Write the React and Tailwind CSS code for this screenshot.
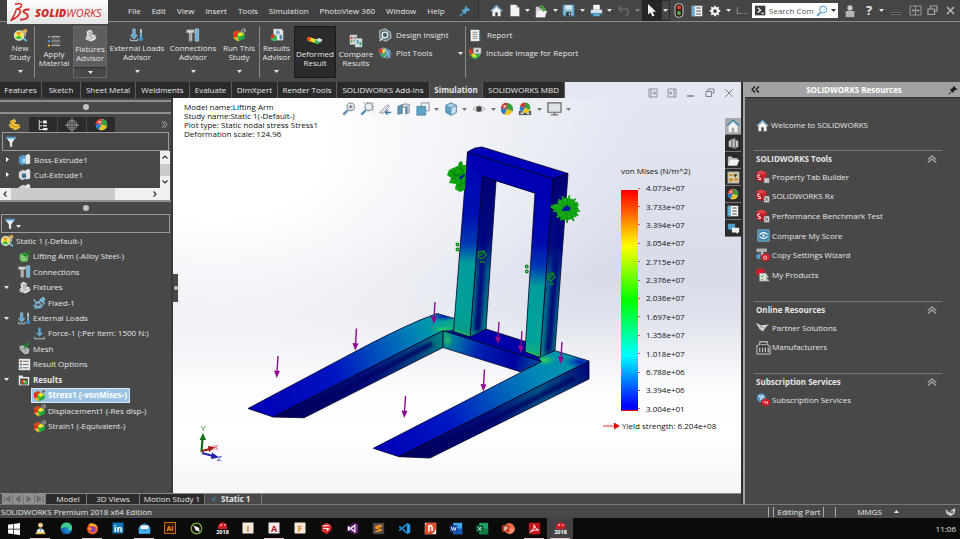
import React from "react";

/* ---------- small drawing helpers ---------- */

function Svg({ size = 14, w, h, box = "0 0 16 16", className = "", children }) {
  return (
    <svg width={w || size} height={h || size} viewBox={box} fill="none" className={"shrink-0 " + className} aria-hidden="true">
      {children}
    </svg>
  );
}

function Caret({ color = "#e8e8e8", up = false }) {
  return (
    <Svg w={5} h={3} box="0 0 5 3">
      <path d={up ? "M0 3L2.5 0L5 3Z" : "M0 0H5L2.5 3Z"} fill={color} />
    </Svg>
  );
}

const Home = ({ size = 12 }) => (
  <Svg size={size}>
    <path d="M3 8V15H6.5V10H9.5V15H13V8L8 3.5Z" fill="#f4f4f4" />
    <path d="M1 8.5L8 2L15 8.5" stroke="#9cc9e0" strokeWidth="1.6" />
    <path d="M1 7.5L8 1L15 7.5" stroke="#2f6f92" strokeWidth="1.2" />
  </Svg>
);

const Wheel = ({ size = 12 }) => (
  <Svg size={size}>
    <circle cx="8" cy="8" r="7" fill="#eee" />
    <path d="M8 8V1A7 7 0 0 1 14.5 10.5Z" fill="#35a03a" />
    <path d="M8 8L14.5 10.5A7 7 0 0 1 5 14.3Z" fill="#f0c419" />
    <path d="M8 8L5 14.3A7 7 0 0 1 1 7Z" fill="#2a78c8" />
    <path d="M8 8L1 7A7 7 0 0 1 8 1Z" fill="#d8302c" />
    <circle cx="5.5" cy="5" r="1.6" fill="#fff" opacity=".75" />
  </Svg>
);

const Magnify = ({ size = 13, extra }) => (
  <Svg size={size}>
    <path d="M6.5 9.500L1.500 14.500" stroke="#5a93b3" strokeWidth="2.800" />
    <circle cx="10" cy="5.500" r="4.300" fill="#e9eff3" stroke="#7f8f99" strokeWidth="1.3" />
    {extra}
  </Svg>
);

const StudyIcon = ({ size = 15 }) => (
  <Svg size={size}>
    <path d="M10 9.500L14.5 14" stroke="#6bb4dc" strokeWidth="2.200" />
    <circle cx="6.500" cy="8" r="5" fill="#f5e636" stroke="#cfe4ea" strokeWidth="1.3" />
    <path d="M2.500 10Q5.500 13 9.500 11L6.500 8Z" fill="#35b954" />
    <path d="M3.500 5Q5.500 3.500 8.500 4.500L6.500 8Z" fill="#f08a2c" />
    <path d="M9 3L14 .5L15.500 4L12 6Z" fill="#d7a85a" />
    <path d="M13 5V9" stroke="#ddd" />
  </Svg>
);

const ListIcon = ({ size = 14 }) => (
  <Svg size={size}>
    <path d="M5 3H15M5 8H15M5 13H15" stroke="#b5b5b5" strokeWidth="1.4" />
    <path d="M5 5.500H15M5 10.500H15" stroke="#7d7d7d" />
    <rect x="1" y="2" width="2.4" height="2.4" fill="#8a8a8a" />
    <rect x="1" y="7" width="2.4" height="2.4" fill="#4f9ed1" />
    <rect x="1" y="12" width="2.4" height="2.4" fill="#e8b13c" />
  </Svg>
);

const FixtureIcon = ({ size = 14 }) => (
  <Svg size={size}>
    <path d="M3 3L7 1L11 3L10 7L13 7L15 9V12L9 15.500L2 13V10L4 8Z" fill="#e6e6e6" />
    <path d="M3 3L7 4.500L6 9L10 11L15 9M2 10.500L8 13L10 11M7 4.500L11 3" stroke="#8b8b8b" strokeWidth=".9" />
    <path d="M7 4.500L10.500 3.500L9.500 7L10 10L6.500 8.500Z" fill="#b9b9b9" />
  </Svg>
);

const LoadsIcon = ({ size = 14 }) => (
  <Svg size={size}>
    <path d="M3 1V8H.5L4.500 13L8.500 8H6V1Z" fill="#5aa7d6" stroke="#cfe7f5" strokeWidth=".5" />
    <path d="M.5 12V14.500H8.500V12" stroke="#bcd" strokeWidth="1.1" />
    <path d="M12.5 1V11" stroke="#d8edf8" strokeWidth="1.8" />
    <circle cx="12.5" cy="12.5" r="2.4" fill="#3c93ca" />
    <path d="M12.5 5V12" stroke="#3c93ca" />
  </Svg>
);

const ConnIcon = ({ size = 14 }) => (
  <Svg size={size}>
    <path d="M.5 2H9.500V5.500H7V15H3.500V5.500H.5Z" fill="#cfcfcf" stroke="#8c8c8c" strokeWidth=".5" />
    <path d="M5.2 6V15" stroke="#777" strokeWidth="1.500" strokeDasharray="1 1" />
    <path d="M10.500 1H14.5V15H10.500Z" fill="#6fb2d8" stroke="#cfe4f0" strokeWidth=".6" />
  </Svg>
);

const HotPart = ({ size = 14, badge = true }) => (
  <Svg size={size}>
    <path d="M1 5L6 2.500L9 5L14.500 6.500L14 12L7 15.500L2 12Z" fill="#2cc24a" />
    <path d="M1 5L6 2.500L9.500 4L6 7Z" fill="#f03a1c" />
    <path d="M1 5L6 7V11L1.500 11.500Z" fill="#e8301c" />
    <path d="M6 7L9.500 4.500L14 7.500L9 10Z" fill="#f6e52b" />
    <path d="M1.500 11.500L6 10L8 15L6 14.800Z" fill="#ffb324" />
    <path d="M9 10L14 7.500V12L7.500 15Z" fill="#24a840" />
    {badge && <path d="M10 3.5L13 .7L15.300 1.500V4L12 5.500Z" fill="#666" stroke="#ddd" strokeWidth=".7" />}
  </Svg>
);

const ResultsIcon = ({ size = 14 }) => (
  <Svg size={size}>
    <path d="M4 1H13L15 3V14H4Z" fill="#e9e9e9" stroke="#999" strokeWidth=".5" />
    <circle cx="9" cy="5" r="2.5" fill="#7fb1d0" />
    <path d="M11 8H13.5V13H11Z" fill="#3f83b3" />
    <path d="M1 9L5 7L8 9V14L4 15L1 13Z" fill="#35b954" />
    <path d="M1 9L5 7L5 11L1 12Z" fill="#e8301c" />
  </Svg>
);

const DeformedIcon = () => (
  <Svg w={16} h={9} box="0 0 16 9">
    <path d="M0 2Q2 0 5 2L11 4V8L5 6Q2 6 0 4Z" fill="#f1e22e" />
    <path d="M0 2Q2 0 3.5 1.3V6L0 4Z" fill="#ef4a1e" />
    <path d="M8 3L15 6L11 8L8 7Z" fill="#2fb64b" />
    <path d="M8 4L12 2L16 4L13 6Z" fill="#d9dfe4" />
  </Svg>
);

const CompareIcon = () => (
  <Svg size={14}>
    <path d="M1 1H9V12H1Z" fill="#e2e2e2" stroke="#999" strokeWidth=".5" />
    <path d="M7 5H15V15H7Z" fill="#d3dde4" stroke="#999" strokeWidth=".5" />
    <path d="M2 3H4V6H2Z" fill="#e03a20" />
    <path d="M2 7H4V10H2Z" fill="#37b04a" />
    <path d="M9 7H11V11H9Z" fill="#3a8cc4" />
    <path d="M12 9H14V13H12Z" fill="#37b04a" />
    <path d="M5 4H8M5 7H7" stroke="#555" />
  </Svg>
);

const InsightIcon = () => (
  <Svg size={14}>
    <path d="M2 3L8 1L14 5L15 11L9 15L2 12Z" fill="#5b6c76" stroke="#b8c5cc" strokeWidth="1.2" />
    <circle cx="8" cy="8" r="3.2" fill="#48606c" stroke="#e7eef2" strokeWidth="1.5" />
    <path d="M5.5 10.5L2 15" stroke="#dfe7ea" strokeWidth="1.5" />
  </Svg>
);

const PlotToolsIcon = () => (
  <Svg size={14}>
    <path d="M1 4L6 2L12 4L15 9L11 14L4 12Z" fill="#3a86c4" stroke="#aab" strokeWidth=".7" />
    <path d="M1 4L5 2.5L5 8L2 8Z" fill="#e8301c" />
    <path d="M5 3L9 4L7 9L5 8Z" fill="#f3df2b" />
    <path d="M5 8L9 9L8 13L4 12Z" fill="#37b04a" />
    <path d="M8 3L14 14M14 5L7 13" stroke="#d5d5d5" strokeWidth="1.1" />
  </Svg>
);

const ReportIcon = () => (
  <Svg size={13}>
    <path d="M3 1H14V15H3Z" fill="#f0f0f0" />
    <path d="M2 2V15" stroke="#222" strokeWidth="1.6" strokeDasharray="1 1" />
    <path d="M13.5 2H15V14H13.5Z" fill="#4f9ed1" />
    <path d="M5.5 4H11.5M5.5 6.5H11.5M5.5 9H11.5M5.5 11.5H11.5" stroke="#777" />
  </Svg>
);

const ImageReportIcon = () => (
  <Svg size={14}>
    <path d="M1 4Q1 14 9 15L14 11V8L6 9Z" fill="#35b954" />
    <path d="M1 4L5 3V10L2 9Z" fill="#e8301c" />
    <path d="M4 9L7 8L10 12L6 13Z" fill="#f3df2b" />
    <path d="M6 2H15V9H6Z" fill="#d5d5d5" stroke="#777" strokeWidth=".6" />
    <circle cx="10.5" cy="5.5" r="2" fill="#666" stroke="#fff" strokeWidth=".6" />
  </Svg>
);

const DocIcon = () => (
  <Svg size={13}>
    <path d="M3 1H10L14 5V15H3Z" fill="#f3f3f3" />
    <path d="M10 1V5H14" fill="#bbb" />
  </Svg>
);
const OpenIcon = () => (
  <Svg size={14}>
    <path d="M2 3H6L7 5H13V15H2Z" fill="#cfcfcf" />
    <path d="M4 8H15L12 15H2Z" fill="#f2f2f2" />
    <path d="M6 2Q11 0 12 5H14.5L11 9L8 5H10Q9 3 6 3Z" fill="#49a23c" />
  </Svg>
);
const SaveIcon = () => (
  <Svg size={13}>
    <path d="M1 1H15V15H3L1 13Z" fill="#7fb4d3" stroke="#2d6485" />
    <path d="M4 1.5H12V7H4Z" fill="#dbe7ee" />
    <path d="M5 10H11V15H5Z" fill="#333" />
    <path d="M8.5 11H10V14H8.5Z" fill="#ddd" />
  </Svg>
);
const PrintIcon = () => (
  <Svg size={13}>
    <path d="M4 1H12V7H4Z" fill="#f5f5f5" />
    <path d="M1 7H15V12H1Z" fill="#d8e1e6" />
    <path d="M1 11H15V13H1Z" fill="#3e8cb8" />
    <path d="M4 12H12V15H4Z" fill="#5fa9d0" />
  </Svg>
);
const UndoIcon = () => (
  <Svg size={13}>
    <path d="M2 6H10Q14 6 14 10Q14 13 11 14M6 2L2 6L6 10" stroke="#636363" strokeWidth="2" />
  </Svg>
);
const Traffic = () => (
  <Svg w={10} h={15} box="0 0 10 15">
    <rect x="1" y=".7" width="8" height="13.6" rx="3.5" fill="#3b1c1a" stroke="#c8c8c8" strokeWidth="1" />
    <circle cx="5" cy="4.5" r="2" fill="#e6402c" />
    <circle cx="5" cy="10" r="2" fill="#44b64b" />
  </Svg>
);
const OptionsIcon = ({ size = 13 }) => (
  <Svg size={size}>
    <path d="M1 1H15V15H1Z" fill="#f4f4f4" />
    <path d="M1 1H5V15H1Z" fill="#4d9cc6" />
    <path d="M2 4H4M2 8H4M2 12H4" stroke="#fff" />
    <path d="M7 4H13M7 8H13M7 12H13" stroke="#3a3a3a" strokeWidth="1.2" />
  </Svg>
);
const Gear = () => (
  <Svg size={12}>
    <circle cx="8" cy="8" r="4" stroke="#f4f4f4" strokeWidth="3" />
    <path d="M8 1V3M8 13V15M1 8H3M13 8H15M3 3L4.6 4.6M11.4 11.4L13 13M3 13L4.6 11.4M11.4 4.6L13 3" stroke="#f4f4f4" strokeWidth="2.4" />
  </Svg>
);
const Pin = ({ color = "#5aa3cc", size = 12 }) => (
  <Svg size={size}>
    <path d="M9 1L15 7L13 8L11 8L9 11L9 13L3 7L5 6.5L8 4.5Z" fill={color} />
    <path d="M6 10L1 15" stroke={color} strokeWidth="1.5" />
  </Svg>
);
const Funnel = () => (
  <Svg size={12}>
    <path d="M1.500 2H14.500L9.5 8.500V15L6.5 13.500V8.500Z" fill="#e8eef1" />
    <path d="M1.500 1H14.500V3.5H1.500Z" fill="#4f9ed1" />
  </Svg>
);
const Swx = ({ extra }) => (
  <Svg size={14}>
    <path d="M0 3L6 .5L12 3V11L6 13.500L0 11Z" fill="#d0222a" />
    <path d="M0 3L7 5V13L0 11Z" fill="#ad161e" />
    <path d="M0 3L6 .5L12 3L7 5Z" fill="#e0444a" />
    <path d="M5 6L2 5.500V8L5 9V11L2 10.500" stroke="#fff" strokeWidth="1.100" />
    {extra}
  </Svg>
);
const Chevrons = () => (
  <Svg w={10} h={8} box="0 0 10 8">
    <path d="M1 4.500L5 1L9 4.500M1 7.500L5 4L9 7.500" stroke="#a0a0a0" strokeWidth="1.500" />
  </Svg>
);

/* ---------- title bar ---------- */

const menus = ["File", "Edit", "View", "Insert", "Tools", "Simulation", "PhotoView 360", "Window", "Help"];

function Tool({ label, className, children }) {
  return (
    <button aria-label={label} className={"flex h-full shrink-0 items-center justify-center " + className}>
      {children}
    </button>
  );
}

function Logo() {
  return (
    <div className="relative z-10 flex h-6 w-[101px] shrink-0 items-center gap-1 self-start bg-gradient-to-b from-white to-[#e4e4e4] pl-[3px]">
      <Svg w={21} h={20} box="0 0 21 20">
        <path d="M5 2.500Q11 .5 11.500 3Q11.500 6 5.500 7.500Q10.500 6.500 10.500 9.500Q9.500 14.500 1.500 18Q4.500 13 6 8.500" stroke="#cf2a27" strokeWidth="1.500" />
        <path d="M19.500 7.500Q13 7 13.500 10Q19 12.500 17.500 15.500Q15.500 18 10 17.500" stroke="#cf2a27" strokeWidth="1.900" />
      </Svg>
      <span className="font-['Open_Sans','Noto_Sans',sans-serif] text-[11px] leading-none text-[#cf2a27] italic">
        <b className="font-extrabold">SOLID</b>WORKS
      </span>
    </div>
  );
}

function TitleBar() {
  return (
    <header className="flex h-[22px] shrink-0 items-center border-b border-[#8a8a8a] bg-[#414141] pl-[7px] text-[8px]">
      <Logo />
      <nav className="flex items-center gap-[11px] pl-5">
        {menus.map((m) => (
          <button key={m} className="whitespace-nowrap">{m}</button>
        ))}
      </nav>
      <div className="flex min-w-5 flex-1 justify-end pr-[7px]">
        <button aria-label="Pin menu"><Pin /></button>
      </div>
      <div className="flex h-full shrink-0 items-center border-l border-[#333] bg-[#454545] pl-[9px]">
        <Tool label="Home" className="w-4"><Home size={13} /></Tool>
        <Tool label="New" className="w-5"><DocIcon /></Tool>
        <Tool label="New options" className="w-1.5"><Caret /></Tool>
        <Tool label="Open" className="w-[22px]"><OpenIcon /></Tool>
        <Tool label="Open options" className="w-1.5"><Caret /></Tool>
        <Tool label="Save" className="w-5"><SaveIcon /></Tool>
        <Tool label="Save options" className="w-2"><Caret /></Tool>
        <Tool label="Print" className="w-5"><PrintIcon /></Tool>
        <Tool label="Print options" className="w-1.5"><Caret /></Tool>
        <Tool label="Undo" className="w-[22px]"><UndoIcon /></Tool>
        <Tool label="Undo options" className="mr-0.5 w-1.5"><Caret color="#888" /></Tool>
        <Tool label="Select" className="w-[19px] border border-[#222] bg-[#262626]">
          <Svg w={10} h={13} box="0 0 10 13">
            <path d="M1 0V10.500L3.500 8.500L5.500 12.500L7.500 11.500L5.500 7.800H9Z" fill="#f2f2f2" />
          </Svg>
        </Tool>
        <Tool label="Select options" className="w-[9px] border border-[#2b2b2b]"><Caret /></Tool>
        <Tool label="Rebuild" className="w-[18px]"><Traffic /></Tool>
        <Tool label="File properties" className="w-[18px]"><OptionsIcon size={12} /></Tool>
        <Tool label="Options" className="w-[18px]"><Gear /></Tool>
        <Tool label="Options list" className="w-2"><Caret /></Tool>
        <span className="w-5 text-center text-[9px] whitespace-nowrap text-[#a0a0a0]">L...</span>
        <label className="flex h-[15px] w-[86px] items-center bg-white pl-[3px]">
          <Svg size={11}>
            <path d="M0 1H15V15H0Z" fill="#3b3b3b" />
            <path d="M4 4L8 7.500L4 11M9 12H13" stroke="#fff" strokeWidth="1.800" />
          </Svg>
          <input aria-label="Search Commands" placeholder="Search Com" className="w-0 min-w-0 flex-1 bg-transparent pl-[3px] text-[8px] outline-none placeholder:text-[#555]" />
          <Svg size={12}>
            <path d="M6 10L1.500 14.500" stroke="#4b93bd" strokeWidth="2.200" />
            <circle cx="9.500" cy="6" r="4.700" fill="#eaf5fb" stroke="#4b93bd" strokeWidth="1.200" />
          </Svg>
          <span className="pr-0.5 pl-[3px]"><Caret color="#333" /></span>
        </label>
        <Tool label="Account" className="w-6">
          <Svg size={14}>
            <circle cx="8" cy="4.500" r="3" fill="#c9c9c9" />
            <path d="M3 8H13V15H3Z" fill="#b5b5b5" />
          </Svg>
        </Tool>
        <Tool label="Help" className="w-3.5 text-[13px] font-bold">?</Tool>
        <Tool label="Help options" className="w-2.5"><Caret /></Tool>
        <Tool label="Minimize" className="w-5">
          <Svg w={10} h={10} box="0 0 10 10"><path d="M1 6.500H9V8.500H1Z" fill="#222" stroke="#999" strokeWidth=".6" /></Svg>
        </Tool>
        <Tool label="Span displays" className="w-[18px]">
          <Svg w={13} h={11} box="0 0 13 11">
            <path d="M1 1H12V10H1ZM6.500 1V10M3 5.500H10M4.500 4L3 5.500L4.500 7M8.500 4L10 5.500L8.500 7" stroke="#9a9a9a" />
          </Svg>
        </Tool>
        <Tool label="Restore" className="w-4">
          <Svg w={11} h={11} box="0 0 11 11"><path d="M3.500 3.500V1H10V6H7.500M1 4H7.500V9.500H1Z" stroke="#a8a8a8" strokeWidth="1.200" /></Svg>
        </Tool>
        <Tool label="Close" className="w-5">
          <Svg w={9} h={9} box="0 0 9 9"><path d="M1 1L8 8M8 1L1 8" stroke="#b5b5b5" strokeWidth="1.600" /></Svg>
        </Tool>
      </div>
    </header>
  );
}

/* ---------- ribbon ---------- */

function BigButton({ icon, lines, className, caret = true, low = false }) {
  return (
    <button className={"flex h-full shrink-0 flex-col items-center leading-[9px] " + (low ? "pt-2.5 " : "pt-[5px] ") + className}>
      <span className="flex h-[17px] items-center">{icon}</span>
      {lines.map((l) => <span key={l} className="whitespace-nowrap">{l}</span>)}
      {caret && <span className="flex h-[22px] items-center"><Caret /></span>}
    </button>
  );
}

const Sep = () => <div className="my-1 w-px shrink-0 bg-[#8a8a8a]" />;

function Ribbon() {
  return (
    <section aria-label="Simulation tools" className="flex h-[60px] shrink-0 bg-[#484848] pl-1.5 text-[8px]">
      <BigButton className="w-7" icon={<StudyIcon />} lines={["New", "Study"]} />
      <Sep />
      <BigButton className="w-[38px]" low caret={false} icon={<ListIcon />} lines={["Apply", "Material"]} />
      <div className="my-1 flex w-[34px] shrink-0 flex-col border border-[#686868]">
        <button className="flex h-10 flex-col items-center bg-[#5e5e5e] leading-[9px]">
          <span className="flex h-[17px] items-center"><FixtureIcon size={13} /></span>
          <span>Fixtures</span><span>Advisor</span>
        </button>
        <button aria-label="Fixtures Advisor options" className="flex flex-1 items-center justify-center border-t border-[#2e2e2e]"><Caret /></button>
      </div>
      <BigButton className="w-[60px]" icon={<LoadsIcon />} lines={["External Loads", "Advisor"]} />
      <BigButton className="w-[52px]" icon={<ConnIcon />} lines={["Connections", "Advisor"]} />
      <BigButton className="w-10" icon={<HotPart />} lines={["Run This", "Study"]} />
      <Sep />
      <BigButton className="mr-px w-[33px]" icon={<ResultsIcon />} lines={["Results", "Advisor"]} />
      <div className="my-1 w-[42px] shrink-0 border border-[#1c1c1c] bg-[#2b2b2b]">
        <button className="flex h-full w-full flex-col items-center pt-[5px] leading-[9px]">
          <span className="flex h-[17px] items-center"><DeformedIcon /></span>
          <span>Deformed</span><span>Result</span>
        </button>
      </div>
      <BigButton className="w-10" low caret={false} icon={<CompareIcon />} lines={["Compare", "Results"]} />
      <div className="flex w-[89px] shrink-0 flex-col gap-1 pt-1.5 pl-0.5">
        <button className="flex h-3.5 items-center gap-1"><InsightIcon />Design Insight</button>
        <button className="flex h-3.5 items-center gap-1"><PlotToolsIcon />Plot Tools<span className="ml-auto pr-0.5"><Caret /></span></button>
      </div>
      <Sep />
      <div className="flex shrink-0 flex-col gap-1 pt-1.5 pl-0.5">
        <button className="flex h-3.5 items-center gap-1.5"><ReportIcon />Report</button>
        <button className="flex h-3.5 items-center gap-1"><ImageReportIcon />Include Image for Report</button>
      </div>
    </section>
  );
}

const tabs = [
  ["Features", "w-[42px]"], ["Sketch", "w-[39px]"], ["Sheet Metal", "w-[55px]"], ["Weldments", "w-[54px]"],
  ["Evaluate", "w-[42px]"], ["DimXpert", "w-[46px]"], ["Render Tools", "w-[59px]"], ["SOLIDWORKS Add-Ins", "w-[93px]"],
  ["Simulation", "w-[53px]"], ["SOLIDWORKS MBD", "w-[82px]"],
];

function TabRow() {
  return (
    <div className="flex h-4 shrink-0 bg-[#e3e7f1] text-[8px]">
      {tabs.map(([name, w]) => (
        <button
          key={name}
          className={"shrink-0 overflow-hidden border-r border-[#5d5d5d] whitespace-nowrap " + w + (name === "Simulation" ? " bg-[#484848] font-bold" : " bg-[#2b2b2b]")}
        >
          {name}
        </button>
      ))}
      <div className="flex flex-1 items-end justify-end gap-[9px] pr-[7px]">
        {[
          ["Collapse left", <path key="a" d="M1 1H9V9H1ZM3 1V9M7 3.500V6.500L5 5Z" stroke="#909298" />],
          ["Collapse right", <path key="b" d="M1 1H9V9H1ZM7 1V9M3 3.500V6.500L5 5Z" stroke="#909298" />],
          ["Minimize document", <path key="c" d="M1 8H8" stroke="#808288" strokeWidth="1.500" />],
          ["Restore document", <path key="d" d="M3 3V1H9V5H7M1 3.500H6.500V8.500H1Z" stroke="#808288" />],
          ["Close document", <path key="e" d="M1 1L9 9M9 1L1 9" stroke="#808288" />],
        ].map(([n, p]) => (
          <button key={n} aria-label={n}><Svg w={10} h={10} box="0 0 10 10">{p}</Svg></button>
        ))}
      </div>
    </div>
  );
}

/* ---------- left panel ---------- */

const Splitter = () => (
  <div className="flex h-3.5 w-[171px] shrink-0 items-center justify-center border-y-2 border-y-[#8e8e8e]">
    <span className="h-1.5 w-1.5 rounded-full bg-[#c4c4c4]" />
  </div>
);

const Extrude = ({ cut }) => (
  <Svg size={13}>
    <path d="M1 5L6 2L10 4V13L5 15L1 12Z" fill={cut ? "#d4d4d4" : "#4f9ed1"} />
    <path d="M9 3L13 1L15 3V13L10 14Z" fill="#e6e6e6" />
    <path d="M5 7H10V12H5Z" fill={cut ? "#2d6f98" : "#a5d2ec"} />
  </Svg>
);

const FolderResults = () => (
  <Svg size={12}>
    <path d="M1 2H6L7 4H15V15H1Z" fill="#e8e8e8" />
    <path d="M3 6H13V14H3Z" fill="#444" />
    <path d="M4 8L7 7V12L4 13Z" fill="#e8301c" /><path d="M7 9H12V13H7Z" fill="#35b954" /><path d="M7 8L10 9L8 12Z" fill="#f3df2b" />
  </Svg>
);

const treeRows = [
  { t: "Lifting Arm (-Alloy Steel-)", d: 1, i: <Svg size={13}><path d="M2 5L8 3L13 6L12 14L5 15L2 12Z" fill="#63b558" /><path d="M4 8L9 9M4 11L10 12" stroke="#c9e8c2" /><path d="M6 4L9 7L15 1" stroke="#1d7f24" strokeWidth="2" /></Svg> },
  { t: "Connections", d: 1, i: <ConnIcon size={13} /> },
  { t: "Fixtures", d: 1, open: true, i: <FixtureIcon size={13} /> },
  { t: "Fixed-1", d: 2, i: <Svg size={14}><path d="M2 4L5 8L10 5L14 8L10 13L4 14L2 10" stroke="#6aaed6" strokeWidth="1.800" /><circle cx="7" cy="10" r="2.500" stroke="#a9d2ea" strokeWidth="1.200" /><path d="M9 4L13 1L15 4L12 7Z" fill="#6aaed6" stroke="#a9d2ea" strokeWidth=".7" /></Svg> },
  { t: "External Loads", d: 1, open: true, i: <LoadsIcon size={13} /> },
  { t: "Force-1 (:Per item: 1500 N:)", d: 2, i: <Svg size={13}><path d="M6.500 1H9.500V7H12.500L8 12L3.500 7H6.500Z" fill="#5aa7d6" /><path d="M2 12V14.500H14V12" stroke="#a9c6d6" strokeWidth="1.200" /></Svg> },
  { t: "Mesh", d: 1, i: <Svg size={13}><path d="M2 5L7 4L14 9L13 14L8 15L2 9Z" fill="#b9bfbb" /><path d="M4 6L12 12M8 5L9 14M3 9L12 8" stroke="#7c837e" strokeWidth=".7" /><path d="M7 3L9 6L14 1" stroke="#1d8f24" strokeWidth="2" /></Svg> },
  { t: "Result Options", d: 1, i: <Svg size={13}><path d="M1 1H15V15H1Z" fill="#ececec" /><path d="M6 4H13M6 8H13M6 12H13" stroke="#555" /><circle cx="3.500" cy="4" r="1.300" fill="#555" /><circle cx="3.500" cy="8" r="1.300" fill="#555" /><circle cx="3.500" cy="12" r="1.300" fill="#3a8cc4" /></Svg> },
  { t: "Results", d: 1, open: true, bold: true, i: <FolderResults /> },
  { t: "Stress1 (-vonMises-)", d: 2, sel: true, bold: true, i: <HotPart size={13} /> },
  { t: "Displacement1 (-Res disp-)", d: 2, i: <HotPart size={13} /> },
  { t: "Strain1 (-Equivalent-)", d: 2, i: <HotPart size={13} /> },
];

function LeftPanel() {
  return (
    <aside className="flex w-[173px] shrink-0 flex-col border-r-2 border-[#3a3a3a] bg-[#484848] pt-0.5 text-[8px]">
      <Splitter />
      <div className="mt-[3px] flex h-[15px] shrink-0 items-stretch gap-px pr-[3px]">
        <button aria-label="Feature tree" className="flex w-7 items-center justify-center">
          <Svg size={13}><path d="M2 4L8 1L10 4L8 7L14 8L15 12L9 15L2 11L1 7L4 7Z" fill="#f0c238" /><path d="M3 8L9 11L14 10M5 4L8 6" stroke="#a97a14" /></Svg>
        </button>
        <button aria-label="Properties" className="flex w-7 items-center justify-center bg-[#2b2b2b]">
          <Svg size={12}><path d="M3 1V14H8M3 4H7M3 9H7" stroke="#ddd" strokeWidth="1.300" /><path d="M8 2H13V6H8ZM8 8H13V10H8ZM8 12H14V15H8Z" fill="#eee" /></Svg>
        </button>
        <button aria-label="Configurations" className="flex w-7 items-center justify-center bg-[#2b2b2b]">
          <Svg size={14}><circle cx="8" cy="8" r="5.500" stroke="#a8a8a8" /><path d="M8 0V16M0 8H16" stroke="#a8a8a8" /><path d="M5 5H11V11H5Z" stroke="#888" /></Svg>
        </button>
        <button aria-label="Appearances" className="flex w-7 items-center justify-center bg-[#2b2b2b]"><Wheel size={13} /></button>
        <button aria-label="More tabs" className="ml-auto">
          <Svg w={7} h={9} box="0 0 7 9"><path d="M1 1L3.500 4.500L1 8M3.500 1L6 4.500L3.500 8" stroke="#a8a8a8" /></Svg>
        </button>
      </div>
      <label className="mx-0.5 flex h-[19px] shrink-0 items-center border border-[#9c9c9c] pl-0.5">
        <Funnel />
        <input aria-label="Filter features" className="w-0 min-w-0 flex-1 bg-transparent outline-none" />
      </label>
      <div className="flex h-[37px] shrink-0">
        <ul className="flex-1 overflow-hidden pt-px">
          {["Boss-Extrude1", "Cut-Extrude1", "Plane1"].map((t, n) => (
            <li key={t} className="flex h-[15px] items-center">
              <span className="w-[18px] pl-1.5">
                {n < 2 && <Svg w={3} h={5} box="0 0 3 5"><path d="M0 0L3 2.500L0 5Z" fill="#fff" /></Svg>}
              </span>
              <Extrude cut={n > 0} />
              <span className="pl-[3px]">{t}</span>
            </li>
          ))}
        </ul>
        <div className="mr-px flex w-[10px] flex-col items-center justify-between bg-[#f0f0f0] py-1">
          <Svg w={6} h={4} box="0 0 6 4"><path d="M.5 3.500L3 1L5.500 3.500" stroke="#333" strokeWidth="1.200" /></Svg>
          <span className="h-3 w-full bg-[#cbcbcb]" />
          <Svg w={6} h={4} box="0 0 6 4"><path d="M.5 .5L3 3L5.500 .5" stroke="#333" strokeWidth="1.200" /></Svg>
        </div>
      </div>
      <div className="mr-px flex h-3 shrink-0 items-center bg-[#f0f0f0] px-[3px]">
        <Svg w={4} h={6} box="0 0 4 6"><path d="M3.500 .5L1 3L3.500 5.500" stroke="#333" strokeWidth="1.200" /></Svg>
        <span className="ml-1 h-full w-[104px] bg-[#cbcbcb]" />
        <Svg w={4} h={6} box="0 0 4 6" className="mr-2.5 ml-auto"><path d="M.5 .5L3 3L.5 5.500" stroke="#333" strokeWidth="1.200" /></Svg>
      </div>
      <div className="flex h-[14px] shrink-0 items-center justify-center border-t-2 border-[#8e8e8e]">
        <span className="h-1.5 w-1.5 rounded-full bg-[#c4c4c4]" />
      </div>
      <label className="mx-px flex h-[19px] shrink-0 items-center border border-[#9c9c9c] pl-0.5">
        <Funnel />
        <span className="self-end pb-1"><Caret /></span>
        <input aria-label="Filter study tree" className="w-0 min-w-0 flex-1 bg-transparent outline-none" />
      </label>
      <ul className="grid h-[201px] shrink-0 auto-rows-fr">
        <li className="flex items-center gap-0.5 whitespace-nowrap"><StudyIcon size={14} />Static 1 (-Default-)</li>
        {treeRows.map((r) => (
          <li key={r.t} className="flex items-center">
            <span className="w-[17px] shrink-0 pl-1">{r.open && <Caret />}</span>
            <span
              className={
                "flex h-[15px] items-center gap-0.5 border whitespace-nowrap " +
                (r.d === 2 ? "ml-3.5 " : "-ml-px ") +
                (r.bold ? "font-bold " : "") +
                (r.sel ? "border-[#d5e8f7] bg-[#9cc3e4] pr-0.5 text-white" : "border-transparent")
              }
            >
              <span className="flex w-3.5 shrink-0 justify-center">{r.i}</span>
              {r.t}
            </span>
          </li>
        ))}
      </ul>
    </aside>
  );
}

/* ---------- 3D viewport ---------- */

const forceArrows = [
  [278, 356], [356.5, 328.5], [435, 302], [499, 322], [522, 331], [562, 342], [484.5, 369.5], [405.5, 396],
];

function Burr({ x, y, r, n = 36 }) {
  const lines = [];
  for (let k = 0; k < n; k++) {
    const a = (k / n) * Math.PI * 2;
    const q = r * (0.82 + 0.18 * Math.sin(k * 2.3));
    lines.push(`M${x + Math.cos(a) * r * 0.3} ${y + Math.sin(a) * r * 0.3}L${x + Math.cos(a) * q} ${y + Math.sin(a) * q}`);
  }
  return (
    <g>
      <circle cx={x} cy={y} r={r * 0.78} fill="#12a312" />
      <path d={lines.join("")} stroke="#16aa16" strokeWidth="1.800" />
      <path d={lines.filter((_, k) => k % 3 === 0).join("")} stroke="#067806" strokeWidth=".6" />
    </g>
  );
}

function Model() {
  return (
    <svg viewBox="173 98 568 395" preserveAspectRatio="xMinYMin meet" className="absolute inset-0 h-full w-full" role="img" aria-label="Stress plot of lifting arm">
      <defs>
        <linearGradient id="postL" gradientUnits="userSpaceOnUse" x1="470" y1="150" x2="462" y2="336">
          <stop offset="0" stopColor="#0000b4" /><stop offset=".35" stopColor="#0010b0" /><stop offset=".5" stopColor="#0038b4" />
          <stop offset=".61" stopColor="#009c9c" /><stop offset=".9" stopColor="#00a096" /><stop offset="1" stopColor="#109a80" />
        </linearGradient>
        <linearGradient id="postR" gradientUnits="userSpaceOnUse" x1="545" y1="178" x2="532" y2="358">
          <stop offset="0" stopColor="#0000b4" /><stop offset=".35" stopColor="#0008b0" /><stop offset=".49" stopColor="#0038b4" />
          <stop offset=".6" stopColor="#009c9c" /><stop offset=".9" stopColor="#00a29a" /><stop offset="1" stopColor="#18b070" />
        </linearGradient>
        <linearGradient id="sideV" x1="0" y1="0" x2="0" y2="1">
          <stop offset="0" stopColor="#000074" /><stop offset=".4" stopColor="#000c80" /><stop offset=".58" stopColor="#005a8c" /><stop offset="1" stopColor="#007a88" />
        </linearGradient>
        <linearGradient id="streakV" x1="0" y1="0" x2="0" y2="1">
          <stop offset="0" stopColor="#000080" stopOpacity="0" /><stop offset=".4" stopColor="#000a80" /><stop offset="1" stopColor="#000a70" />
        </linearGradient>
        <linearGradient id="forkL" gradientUnits="userSpaceOnUse" x1="262" y1="412" x2="446" y2="322">
          <stop offset="0" stopColor="#0000b8" /><stop offset=".4" stopColor="#0014c0" /><stop offset=".65" stopColor="#0054bc" /><stop offset=".85" stopColor="#0088b4" /><stop offset=".97" stopColor="#00a0a0" /><stop offset="1" stopColor="#08a890" />
        </linearGradient>
        <linearGradient id="forkR" gradientUnits="userSpaceOnUse" x1="388" y1="452" x2="560" y2="357">
          <stop offset="0" stopColor="#0000b8" /><stop offset=".35" stopColor="#0018c4" /><stop offset=".6" stopColor="#0054bc" /><stop offset=".85" stopColor="#0088b8" /><stop offset="1" stopColor="#0094ac" />
        </linearGradient>
        <linearGradient id="forkSideL" gradientUnits="userSpaceOnUse" x1="290" y1="417" x2="443" y2="340">
          <stop offset="0" stopColor="#00005c" /><stop offset=".5" stopColor="#000c7c" /><stop offset=".85" stopColor="#004a84" /><stop offset="1" stopColor="#008080" />
        </linearGradient>
        <linearGradient id="forkSideR" gradientUnits="userSpaceOnUse" x1="415" y1="458" x2="589" y2="370">
          <stop offset="0" stopColor="#00005c" /><stop offset=".45" stopColor="#000c7c" /><stop offset=".72" stopColor="#005484" /><stop offset=".85" stopColor="#003880" /><stop offset="1" stopColor="#000878" />
        </linearGradient>
        <linearGradient id="beam" gradientUnits="userSpaceOnUse" x1="443" y1="340" x2="532" y2="366">
          <stop offset="0" stopColor="#109a80" /><stop offset=".15" stopColor="#0070a8" /><stop offset=".4" stopColor="#0020b0" /><stop offset=".8" stopColor="#0000a0" /><stop offset="1" stopColor="#0040a0" />
        </linearGradient>
        <radialGradient id="hot"><stop offset="0" stopColor="#3cd84a" /><stop offset="1" stopColor="#10b080" stopOpacity="0" /></radialGradient>
        <radialGradient id="cool"><stop offset="0" stopColor="#0010b8" /><stop offset="1" stopColor="#0040b8" stopOpacity="0" /></radialGradient>
        <filter id="soft" x="-20%" y="-20%" width="140%" height="140%"><feGaussianBlur stdDeviation="1.500" /></filter>
        <clipPath id="sides">
          <path d="M482.500 176.500L496 181L486 329L470 337ZM553 178.500L568 173.500L555 350L540 357.500ZM273 417L304 417.800L443 347.500V330.700ZM399 456.700L430 458L589 379V361Z" />
        </clipPath>
        <clipPath id="tops">
          <path d="M248 408.500L355 351.700Q390 333 420 320L437 313.500L458 319.500L456 333L443 330.700L273 417ZM373.300 448.300L541.700 361.700L538 357L555 350.700L589 361L399 456.700Z" />
        </clipPath>
      </defs>

      <g stroke="#000028" strokeWidth=".8" strokeLinejoin="round">
        <path d="M248 408.500L355 351.700Q390 333 420 320L437 313.500L458 319.500L456 333L443 330.700L273 417Z" fill="url(#forkL)" />
        <path d="M273 417L304 417.800L443 347.500V330.700Z" fill="url(#forkSideL)" />
        <path d="M443 330.700L486 329L530 343L555 350L541.700 361.700Z" fill="#0000a8" />
        <path d="M443 330.700L541.700 361.700L520 371.700L443 347.500Z" fill="url(#beam)" />
        <path d="M373.300 448.300L541.700 361.700L538 357L555 350.700L589 361L399 456.700Z" fill="url(#forkR)" />
        <path d="M399 456.700L430 458L589 379V361Z" fill="url(#forkSideR)" />
        <path d="M482.500 176.500L496 181L486 329L470 337Z" fill="url(#sideV)" />
        <path d="M553 178.500L568 173.500L555 350L540 357.500Z" fill="url(#sideV)" />
      </g>
      <g clipPath="url(#tops)">
        <ellipse cx="444" cy="316" rx="16" ry="6" fill="url(#cool)" />
        <ellipse cx="580" cy="362" rx="16" ry="7" fill="url(#cool)" />
        <ellipse cx="443" cy="329" rx="16" ry="5" fill="url(#hot)" opacity=".7" />
        <ellipse cx="544" cy="360" rx="14" ry="6" fill="url(#hot)" />
      </g>
      <ellipse cx="448" cy="340" rx="5" ry="8" fill="url(#hot)" opacity=".6" />
      <g clipPath="url(#sides)">
        <g filter="url(#soft)">
          <path d="M300 413L432 343.500" stroke="#000060" strokeWidth="5" opacity=".8" />
          <path d="M430 452L575 378" stroke="#000060" strokeWidth="5" opacity=".8" />
          <path d="M485 200L488 201L480 330L475 330ZM559 205L563 205L551 350L546 352Z" fill="url(#streakV)" stroke="url(#streakV)" strokeWidth="2" />
        </g>
      </g>

      <g stroke="#000028" strokeWidth=".8" strokeLinejoin="round">
        <path d="M467.500 152L482.500 176.500L470 337L453.500 331.700Z" fill="url(#postL)" stroke="none" />
        <path d="M553 178.500L535 193L525 352L540 357.500Z" fill="url(#postR)" stroke="none" />
        <path d="M467.500 152L553 178.500L552 194L535 193.500L482.500 176.500L467 166Z" fill="#0000b2" stroke="none" />
        <path d="M467.500 152L453.500 331.700L470 337L482.500 176.500L535 193L525 352L540 357.500L553 178.500Z" fill="none" />
        <path d="M467.500 152Q474 147 482 147L568 173.500L553 178.500Z" fill="#0000ba" />
      </g>
      <path d="M455 330L470 335.500M526 351L540 356" stroke="#49c832" strokeWidth="1" opacity=".7" />

      <path d="M453 168L458 166L459 162L462 161L463 165L466 165L465 190L460 192L455 189L456 184L449 183L451 178L447 175L449 170Z" fill="#12a312" />
      <path d="M450 171L458 176M452 180L461 172M456 167L464 171M457 187L465 182M460 164L464 176M451 175H464M461 190V180M455 169L454 180" stroke="#067806" strokeWidth=".8" />
      <path d="M459 177L465 174V176L460 180Z" fill="#0020a0" />
      <Burr x={567} y={209} r={14} />
      <path d="M551 205H560V213L551 208Z" fill="#14a814" />
      <path d="M563 208L567 205L571 208L569 211L562 211Z" fill="#0018a0" />
      <g stroke="#0a8a1c" strokeWidth="1.400" fill="none">
        <circle cx="457.500" cy="244.500" r="1.300" /><circle cx="457.500" cy="249.500" r="1.300" />
        <circle cx="526.800" cy="266.500" r="1.300" /><circle cx="526.800" cy="271.500" r="1.300" />
        <path d="M478.500 252V257L482 259L486 255L484 251ZM480 256L485 251M480 262H485" />
        <path d="M548 274V279L551 281L555 277L553 273ZM549 278L554 273M549 284H554" />
      </g>

      {forceArrows.map(([x, y]) => (
        <g key={x}>
          <path d={`M${x} ${y}L${x - 1} ${y + 16}`} stroke="#8e0a8e" strokeWidth="1.400" />
          <path d={`M${x - 4} ${y + 14.5}L${x + 2} ${y + 15}L${x - 1.3} ${y + 22}Z`} fill="#8e0a8e" />
        </g>
      ))}

      <path d="M201.500 452L202.500 439" stroke="#157015" strokeWidth="2.200" />
      <path d="M199.500 440L203 433L206 440Z" fill="#157015" />
      <path d="M202 451L210 449" stroke="#a01818" strokeWidth="2" /><path d="M208 446L215 447L209 452Z" fill="#a01818" />
      <path d="M202 453L213 456" stroke="#2020a8" strokeWidth="2" /><path d="M212 452.500L219 457.500L211 459Z" fill="#2020a8" />
      <g fontFamily="'Liberation Sans', Arial, sans-serif" fontSize="8">
        <text x="200.500" y="431" fill="#2a8a2a">Y</text>
        <text x="213" y="450" fill="#e03030">X</text>
        <text x="217" y="461" fill="#3030d0">Z</text>
      </g>
    </svg>
  );
}

const legend = ["4.073e+07", "3.733e+07", "3.394e+07", "3.054e+07", "2.715e+07", "2.376e+07", "2.036e+07", "1.697e+07", "1.358e+07", "1.018e+07", "6.788e+06", "3.394e+06", "3.004e+01"];

function Legend() {
  return (
    <div className="absolute top-[67px] right-[20px] w-[118px] text-[8px] leading-3 text-[#111]">
      <p className="pl-[18px] whitespace-nowrap">von Mises (N/m^2)</p>
      <div className="flex items-start pl-[18px]">
        <div className="mt-[13px] h-[221px] w-[17px] border-y border-[#f00000] bg-[linear-gradient(to_bottom,#ff0000_0%,#ff7800_12%,#ffff00_25%,#00ff00_50%,#00ffff_75%,#0000ff_98%)]" />
        <ol className="grid h-[241px] auto-rows-fr pt-0.5">
          {legend.map((v) => (
            <li key={v} className="flex items-center gap-1.5">
              <span className="h-px w-0.5 bg-[#e05050]" />{v}
            </li>
          ))}
        </ol>
      </div>
      <p className="flex items-center gap-0.5 pt-0.5 whitespace-nowrap">
        <Svg w={17} h={8} box="0 0 17 8"><path d="M0 4H12" stroke="#e33" strokeWidth="1" /><path d="M11 .5L17 4L11 7.500Z" fill="#f00000" /></Svg>
        Yield strength: 6.204e+08
      </p>
    </div>
  );
}

const CubeIcon = ({ back }) => (
  <Svg size={14}>
    {back && <path d="M6 1H15V10H6Z" fill="#eef2f5" stroke="#667" strokeWidth=".8" />}
    <path d={back ? "M1 5H11V15H1Z" : "M2 4L8 1L14 4V12L8 15L2 12Z"} fill="#5fa5c9" stroke="#3d7391" strokeWidth=".8" />
    {!back && <path d="M8 7L14 4V12L8 15Z" fill="#cfe3ee" stroke="#3d7391" strokeWidth=".6" />}
    {!back && <path d="M2 4L8 1L14 4L8 7Z" fill="#a8d2e8" stroke="#3d7391" strokeWidth=".6" />}
  </Svg>
);

const viewTools = [
  ["Zoom to fit", "w-[18px]", <Magnify key="1" size={14} extra={<path d="M8 5.500H12M10 3.500V7.500" stroke="#556" />} />],
  ["Zoom to area", "w-[18px]", <Magnify key="2" size={14} extra={<path d="M4 1H15V12" stroke="#889" strokeDasharray="2 1.500" />} />],
  ["Previous view", "w-[18px]", <Svg key="3" size={14}><path d="M2 12L11 3L13 5L6 13Z" fill="#dde2e5" stroke="#778" strokeWidth=".8" /><path d="M15 12H9M11 9.500L8.500 12L11 14.500" stroke="#3c7ea3" strokeWidth="1.500" /></Svg>],
  ["Section view", "w-[19px]", <Svg key="4" size={14}><path d="M1 5L6 3V13L1 14Z" fill="#5f98b8" stroke="#456" strokeWidth=".7" /><path d="M6 3Q9 1 14 3V12L10 14V6H6Z" fill="#d5dde2" stroke="#456" strokeWidth=".7" /><path d="M11 5V13" stroke="#4f87a8" strokeWidth="2" /></Svg>],
  ["View orientation", "w-[19px]", <CubeIcon key="5" back />],
  ["Orientation options", "w-[8px]", <Caret key="6" color="#777" />],
  ["Display style", "w-[21px]", <CubeIcon key="7" />],
  ["Display options", "w-[6px]", <Caret key="8" color="#777" />],
  ["Hide or show items", "w-[23px]", <Svg key="9" size={14}><path d="M1 8Q8 1 15 8Q8 14 1 8Z" fill="#f2f2f2" stroke="#999" strokeWidth=".9" /><circle cx="8" cy="8" r="3.200" fill="#444" /></Svg>],
  ["Hide options", "w-[6px]", <Caret key="10" color="#777" />],
  ["Edit appearance", "w-[22px]", <Wheel key="11" size={14} />],
  ["Apply scene", "w-[14px]", <Svg key="12" size={14}><path d="M1 10H15V15H1Z" fill="#555" /><path d="M3 12H6V14H3ZM10 12H13V14H10Z" fill="#ddd" /><circle cx="8" cy="6.500" r="6" fill="#eee" /><path d="M8 6.500V.5A6 6 0 0 1 13.500 9Z" fill="#35a03a" /><path d="M8 6.500L2.200 5A6 6 0 0 1 8 .5Z" fill="#d8302c" /><path d="M8 6.500L2.200 5A6 6 0 0 0 5 11.700Z" fill="#2a78c8" /><path d="M8 6.500L13.500 9A6 6 0 0 1 5 11.700Z" fill="#f0c419" /></Svg>],
  ["Scene options", "w-[14px]", <Caret key="13" color="#777" />],
  ["View settings", "w-[16px]", <Svg key="14" w={15} h={14} box="0 0 16 15"><path d="M1 1H15V11H1Z" fill="#dfe3e8" stroke="#666" strokeWidth="1.300" /><path d="M7 11H9V13H12V14.500H4V13H7Z" fill="#777" /></Svg>],
  ["View settings options", "w-[12px]", <Caret key="15" color="#777" />],
];

const sideTabs = [
  ["Resources", <Home key="h" size={14} />],
  ["Design library", <Svg key="d" size={13}><path d="M2 5L6 2V13L2 12ZM6 3L10 1V14L6 13ZM10 3L14 5V12L10 14Z" fill="#c9c9c9" stroke="#555" strokeWidth=".8" /></Svg>],
  ["File explorer", <Svg key="f" size={13}><path d="M1 3H6L7 5H13V14H1Z" fill="#bbb" /><path d="M4 7H15.500L12 14H1Z" fill="#f1f1f1" /></Svg>],
  ["View palette", <Svg key="v" size={13}><path d="M1 1H15V15H1Z" fill="#d9d0b0" stroke="#888" /><path d="M3 4H7V6H3ZM3 9H7V13H3ZM9 9H13V12H9Z" fill="#c58a1c" /><path d="M8 4H13L10 8Z" fill="#333" /></Svg>],
  ["Appearances", <Wheel key="w" size={12} />],
  ["Custom properties", <OptionsIcon key="o" size={12} />],
  ["Forum", <Svg key="c" size={13}><path d="M1 2H10V9H5L3 11V9H1Z" fill="#4f9ed1" /><path d="M6 7H15V13H13V15L11 13H6Z" fill="#f0f0f0" /></Svg>],
];

function Viewport() {
  return (
    <main className="relative min-w-0 flex-1 overflow-hidden bg-[radial-gradient(ellipse_75%_75%_at_8%_12%,#ffffff_25%,#ffffff00_100%),linear-gradient(to_bottom,#e3e7f1_0%,#d8dce9_45%,#dfe2ec_55%,#fdfdfe_74%,#ffffff_85%,#f4f5f8_100%)]">
      <Model />
      <div className="relative flex items-start justify-between pt-1 pr-[167px] pl-[11px]">
        <div className="text-[8px] leading-[9px] whitespace-nowrap text-[#111]">
          <p>Model name:Lifting Arm</p>
          <p>Study name:Static 1(-Default-)</p>
          <p>Plot type: Static nodal stress Stress1</p>
          <p>Deformation scale: 124.96</p>
        </div>
        <div className="flex h-3.5 shrink-0 items-center">
          {viewTools.map(([n, w, icon]) => (
            <button key={n} aria-label={n} className={"flex items-center justify-center " + w}>{icon}</button>
          ))}
        </div>
      </div>
      <Legend />
      <button aria-label="Collapse panel" className="absolute top-[176px] left-0 flex h-7 w-[5px] items-center justify-center bg-[#484848]">
        <span className="h-1 w-1 rounded-full bg-[#c4c4c4]" />
      </button>
      <div className="absolute top-5 right-0 flex w-4 flex-col gap-px bg-[#777] pb-px">
        {sideTabs.map(([n, icon], k) => (
          <button key={n} aria-label={n} className={"flex h-4 items-center justify-center " + (k === 0 ? "bg-[#aaabae]" : "bg-[#2b2b2b]")}>{icon}</button>
        ))}
      </div>
    </main>
  );
}

function ModelTabs() {
  return (
    <div className="flex h-[11px] shrink-0 items-stretch border-t border-[#8a8a8a] bg-[#484848] pl-0.5 text-[8px] leading-[10px]">
      {["M2 2V8M8 2L4 5L8 8Z", "M7 2L3 5L7 8Z", "M3 2L7 5L3 8Z", "M8 2V8M2 2L6 5L2 8Z"].map((d, n) => (
        <button key={d} aria-label={["First", "Previous", "Next", "Last"][n] + " tab"} className="w-[11px] border-r border-[#777] bg-[#8f8f8f]">
          <Svg w={10} h={10} box="0 0 10 10"><path d={d} fill="#6a6a6a" stroke="#6a6a6a" /></Svg>
        </button>
      ))}
      <button className="w-[41px] border-r border-[#777] bg-[#2b2b2b] pl-1">Model</button>
      <button className="w-[53px] border-r border-[#777] bg-[#2b2b2b]">3D Views</button>
      <button className="w-[65px] border-r border-[#777] bg-[#2b2b2b] whitespace-nowrap">Motion Study 1</button>
      <button className="flex w-[57px] items-center gap-1 border-r border-[#777] pl-1.5 font-bold whitespace-nowrap">
        <Svg w={6} h={6} box="0 0 6 6"><path d="M1 5L5 1M1 2L4 5" stroke="#3a7594" strokeWidth="1.500" /></Svg>
        Static 1
      </button>
    </div>
  );
}

/* ---------- resources panel ---------- */

const sections = [
  {
    title: "SOLIDWORKS Tools", cls: "mt-[17px] pb-4", list: "h-[118px]",
    items: [
      ["Property Tab Builder", <Swx key="a" extra={<path d="M9 9H15.500V15H9Z" fill="#c4c4c4" stroke="#555" strokeWidth=".6" />} />],
      ["SOLIDWORKS Rx", <Swx key="b" extra={<g><path d="M9 8H15.500V15.500H9Z" fill="#ddd" stroke="#444" strokeWidth=".6" /><path d="M10 9L14 14M14 10L10 14" stroke="#333" strokeWidth=".8" /></g>} />],
      ["Performance Benchmark Test", <Swx key="c" extra={<g><path d="M9 8H15.500V15.500H9Z" fill="#ddd" stroke="#444" strokeWidth=".6" /><path d="M10 9L14 14M14 10L10 14" stroke="#333" strokeWidth=".8" /></g>} />],
      ["Compare My Score", <Svg key="d" size={13}><path d="M1 1H15V15H1Z" fill="#3e86b4" stroke="#8bbad6" /><path d="M3 7Q8 2 13 7M3 9Q8 14 13 9" stroke="#fff" strokeWidth="1.500" /><circle cx="8" cy="8" r="1.500" fill="#fff" /></Svg>],
      ["Copy Settings Wizard", <Svg key="e" size={14}><path d="M1 1H12V4H8V9H6V4H1Z" fill="#aaa" stroke="#ddd" strokeWidth=".6" /><path d="M0 8L5 6V13L1 12Z" fill="#4f9ed1" /><path d="M6 8L11 6L16 8V13L11 15.500L6 13Z" fill="#cc1f27" /><circle cx="10.500" cy="11" r="1.800" stroke="#fff" strokeWidth=".9" /></Svg>],
      ["My Products", <Svg key="f" size={14}><path d="M0 2L5 0L10 2V7L5 9L0 7Z" fill="#cc1f27" /><path d="M4 6H12V15H4Z" fill="#e6e6e6" stroke="#888" strokeWidth=".5" /><path d="M5.500 9L7 10.500L9 8M5.500 12.500L7 14L9 12" stroke="#37a04a" /><circle cx="12.500" cy="10" r="1.700" fill="#bbb" /><path d="M10 15Q12.500 10 15.500 15Z" fill="#bbb" /></Svg>],
    ],
  },
  {
    title: "Online Resources", cls: "pb-4", list: "h-[39px]",
    items: [
      ["Partner Solutions", <Svg key="g" size={14}><path d="M0 2L6 5L15 4L11 7L8 12L4 9Z" fill="#d5d5d5" /><path d="M4 6L9 8" stroke="#888" /></Svg>],
      ["Manufacturers", <Svg key="h" size={15}><path d="M1 15V6L4 5V2H12V5L15 7V15Z" fill="#3a3a3a" stroke="#c9c9c9" strokeWidth="1.100" /><path d="M4 8V13M7 8V13M10 8V13M13 8V13" stroke="#c9c9c9" strokeWidth="1.300" /><path d="M5 5H11" stroke="#c9c9c9" /></Svg>],
    ],
  },
  {
    title: "Subscription Services", cls: "", list: "h-5",
    items: [
      ["Subscription Services", <Svg key="i" size={14}><circle cx="6" cy="5.500" r="5" fill="#4f9ed1" /><path d="M3 3L7 5L5 8M7 2L9 5" stroke="#e3eff6" strokeWidth="1.300" /><path d="M6 8L11 6L16 8V13L11 15.500L6 13Z" fill="#cc1f27" /><path d="M8.500 10H11V12M13 9.500V12.500" stroke="#fff" strokeWidth=".9" /></Svg>],
    ],
  },
];

function Resources() {
  return (
    <aside className="flex w-[219px] shrink-0 flex-col border-l-2 border-[#2f2f2f] bg-[#484848] text-[8px]">
      <div className="flex flex-1 flex-col border-l-2 border-[#a2a2a5]">
        <div className="flex h-4 shrink-0 items-center border-b border-[#2f2f2f] bg-[#a2a2a5] pr-0.5 pl-1.5">
          <button aria-label="Collapse resources">
            <Svg w={9} h={7} box="0 0 9 7"><path d="M4 .5L1 3.500L4 6.500M8 .5L5 3.500L8 6.500" stroke="#1d1d1d" strokeWidth="1.300" /></Svg>
          </button>
          <h2 className="flex-1 text-center font-bold text-white">SOLIDWORKS Resources</h2>
          <button aria-label="Pin resources"><Pin color="#1d1d1d" size={10} /></button>
        </div>
        <div className="flex-1 pr-[18px] pl-[9px]">
          <a href="#welcome" className="mt-[19px] flex h-4 items-center gap-0.5 pl-0.5"><Home size={13} />Welcome to SOLIDWORKS</a>
          {sections.map((s) => (
            <section key={s.title} className={s.cls}>
              <div className="flex h-[17px] items-center justify-between border-t border-[#757575] pr-[5px] pl-0.5">
                <h3 className="font-bold">{s.title}</h3>
                <button aria-label={"Collapse " + s.title}><Chevrons /></button>
              </div>
              <ul className={"grid auto-rows-fr " + s.list}>
                {s.items.map(([t, icon]) => (
                  <li key={t}>
                    <a href={"#" + t.replaceAll(" ", "-")} className="flex h-full items-center gap-0.5 pl-0.5">
                      <span className="flex w-3.5 shrink-0 justify-center">{icon}</span>{t}
                    </a>
                  </li>
                ))}
              </ul>
            </section>
          ))}
        </div>
      </div>
    </aside>
  );
}

/* ---------- status bar and taskbar ---------- */

function StatusBar() {
  return (
    <footer className="flex h-3.5 shrink-0 items-center border-t border-[#7a7a7a] bg-[#484848] pl-px text-[8px]">
      <span className="flex-1">SOLIDWORKS Premium 2018 x64 Edition</span>
      <span className="mr-1 h-2.5 w-px bg-[#aaa]" />
      <span className="border-x border-[#aaa] px-[3px] leading-[10px]">Editing Part</span>
      <span className="ml-[11px] h-2.5 w-px bg-[#aaa]" />
      <span className="pr-3 pl-[21px]">MMGS</span>
      <button aria-label="Unit system" className="mr-[46px]"><Caret up /></button>
      <Svg size={11} className="mr-1"><path d="M1 4L6 10L9 6L15 3L14 11L8 15L2 11Z" fill="#d0d0d0" /><circle cx="10" cy="9" r="2" fill="#666" /></Svg>
    </footer>
  );
}

const Tile = ({ bg, fg = "#fff", border = "none", children }) => (
  <Svg size={12} box="0 0 12 12">
    <rect x=".5" y=".5" width="11" height="11" fill={bg} stroke={border} />
    <text x="6" y="9.500" fontSize="9" fontWeight="700" textAnchor="middle" fill={fg} fontFamily="'Open Sans', sans-serif">{children}</text>
  </Svg>
);

const SwxTask = () => (
  <Svg size={13} box="0 0 13 13">
    <path d="M2 3L6 0L11 2V7H2Z" fill="#cc1f27" />
    <path d="M4 3H6M8 3H9.500" stroke="#fff" />
    <text x="6.500" y="12" fontSize="5.500" fontWeight="700" textAnchor="middle" fill="#fff" fontFamily="'Open Sans', sans-serif">2018</text>
  </Svg>
);

const apps = [
  ["Contacts", true, <Svg key="1" size={13}><circle cx="8" cy="4" r="3" fill="#f2c79a" /><path d="M3 14Q3 8 8 8Q13 8 13 14Z" fill="#e9edf0" /><path d="M2 13H14V15H2Z" fill="#e2b13c" /><path d="M7 8H9L8 12Z" fill="#3a8cc4" /></Svg>],
  ["Edge", false, <Svg key="2" size={13}><circle cx="8" cy="8" r="7" fill="#1b7fd0" /><path d="M1 8A7 7 0 0 1 15 7Q15 11 10 10.500Q11 6 7 6Q3 6 1 8Z" fill="#3fc98b" /><path d="M6 7Q4 12 10 14.500Q3 16 1.500 10Q3 7 6 7Z" fill="#1560a8" /></Svg>],
  ["Firefox", true, <Svg key="3" size={13}><circle cx="8" cy="8.500" r="6.700" fill="#f4592b" /><path d="M3 3Q6 1 9 2Q14 3 14.500 9Q13 5 9 5Q5 5 3 3Z" fill="#fdb92e" /><circle cx="8" cy="9" r="3.200" fill="#7a3fd0" /><path d="M2 7Q4 6 8 8Q6 11 4 10Z" fill="#fd8f2e" /></Svg>],
  ["LinkedIn", false, <Tile key="4" bg="#0f76b8">in</Tile>],
  ["Mail", true, <Svg key="5" size={13}><path d="M1 6L8 1L15 6V14H1Z" fill="#1b76b8" /><path d="M3 4H13V9H3Z" fill="#f2f6f9" /><path d="M1 6L8 11L15 6V14.500H1Z" fill="#46b0ea" /></Svg>],
  ["Illustrator", false, <Svg key="6" size={12} box="0 0 12 12"><rect x=".5" y=".5" width="11" height="11" fill="#2d1703" stroke="#c96a10" /><text x="6" y="8.500" fontSize="7" fontWeight="700" textAnchor="middle" fill="#f08a1c" fontFamily="'Open Sans', sans-serif">Ai</text></Svg>],
  ["CorelDRAW", false, <Svg key="7" size={13}><circle cx="8" cy="8" r="6.500" fill="#111" stroke="#7fb540" strokeWidth="1.500" /><path d="M4 4L11 7L12 12L7 10Z" fill="#eee" /></Svg>],
  ["SOLIDWORKS 2018 launcher", false, <SwxTask key="8" />],
  ["Inventor", false, <Tile key="9" bg="#f2e9da" fg="#d98a20">I</Tile>],
  ["AutoCAD", true, <Tile key="10" bg="#f3e9e9" fg="#b3121d">A</Tile>],
  ["Fusion", false, <Tile key="11" bg="#f6e9db" fg="#e58a2a">F</Tile>],
  ["SketchUp", false, <Svg key="12" size={13}><path d="M2 4L8 1L14 4V10L8 15L2 11Z" fill="#dc2a2e" /><path d="M4 5L11 4M4 8L10 8L9 11" stroke="#fff" strokeWidth="1.500" /></Svg>],
  ["Visual Studio", false, <Svg key="13" size={13}><path d="M11 1L15 3V13L11 15L1 10V6Z" fill="#68217a" /><path d="M3 6L11 12V4L3 10Z" stroke="#fff" strokeWidth="1.400" /></Svg>],
  ["Sublime Text", false, <Svg key="14" size={13}><path d="M1 1H15V15H1Z" fill="#4a4a4a" /><path d="M4 5L12 3V6L7 7.500L12 9V11L4 13V11L9 9.500L4 8Z" fill="#f8961c" /></Svg>],
  ["VS Code", false, <Svg key="15" size={13}><path d="M11 1L15 3V13L11 15Z" fill="#2aa0e8" /><path d="M1.500 5.500L12 14M1.500 10.500L12 2" stroke="#1f84cc" strokeWidth="2.200" /></Svg>],
  ["Nitro PDF", false, <Svg key="16" size={13}><path d="M1 1H15V15H1Z" fill="#f0f0f0" /><path d="M3 1H15V8Q12 15 8 15H1V5Z" fill="#e0502c" /><path d="M6 12V5Q10 3 10 8V11" stroke="#fff" strokeWidth="2" /></Svg>],
  ["Word", false, <Svg key="17" size={13}><path d="M4 1H15V15H4Z" fill="#41a5ee" /><path d="M4 8H15V15H4Z" fill="#185abd" /><path d="M0 4H9V12H0Z" fill="#103f91" /><path d="M1.500 6L3 10.500L4.500 6.500L6 10.500L7.500 6" stroke="#fff" /></Svg>],
  ["Excel", false, <Svg key="18" size={13}><path d="M4 1H15V15H4Z" fill="#21a366" /><path d="M9 8H15V15H4Z" fill="#107c41" /><path d="M0 4H9V12H0Z" fill="#0b5c30" /><path d="M2.500 6L6.500 10.500M6.500 6L2.500 10.500" stroke="#fff" strokeWidth="1.200" /></Svg>],
  ["PowerPoint", false, <Svg key="19" size={13}><circle cx="9" cy="8" r="6.700" fill="#ed6c47" /><path d="M9 8H15.700A6.700 6.700 0 0 1 9 14.700Z" fill="#ff8f6b" /><path d="M0 4H9V12H0Z" fill="#b7391b" /><path d="M3.500 11V6H6Q7 7.500 6 8.500H3.500" stroke="#fff" /></Svg>],
  ["Acrobat", true, <Svg key="20" size={13}><path d="M1 1H15V15H1Z" fill="#c4141c" /><path d="M3 12Q8 9 7.500 3.500Q9 9 13 10Q8 9 3 12Z" stroke="#fff" strokeWidth="1.200" /></Svg>],
  ["SOLIDWORKS 2018", true, <SwxTask key="21" />],
];

function Taskbar() {
  return (
    <div className="flex h-[21px] shrink-0 items-stretch bg-[#0b0b09]">
      <button aria-label="Start" className="flex w-[27px] items-center justify-center">
        <Svg w={12} h={12} box="0 0 12 12"><path d="M0 1.700L5 1V5.700H0ZM5.700 .9L12 0V5.700H5.700ZM0 6.400H5V11L0 10.400ZM5.700 6.400H12V12L5.700 11.200Z" fill="#fff" /></Svg>
      </button>
      {apps.map(([n, running, icon]) => (
        <button key={n} aria-label={n} className={"flex w-[26px] flex-col items-center " + (n === "SOLIDWORKS 2018" ? "bg-[#444244]" : "")}>
          <span className="flex flex-1 items-center">{icon}</span>
          <span className={"h-px w-5 " + (running ? "bg-[#d8c8cc]" : "")} />
        </button>
      ))}
      <time className="ml-auto self-center pr-1 text-[8px] text-[#e8e8e8]">11:06</time>
    </div>
  );
}

export default function App() {
  return (
    <div className="flex h-screen flex-col overflow-hidden bg-[#484848] font-['Open_Sans','Noto_Sans',sans-serif] leading-none text-[#e6e6e6]">
      <TitleBar />
      <Ribbon />
      <div className="flex min-h-0 flex-1">
        <div className="flex min-w-0 flex-1 flex-col">
          <TabRow />
          <div className="flex min-h-0 flex-1">
            <LeftPanel />
            <Viewport />
          </div>
          <ModelTabs />
        </div>
        <Resources />
      </div>
      <StatusBar />
      <Taskbar />
    </div>
  );
}
